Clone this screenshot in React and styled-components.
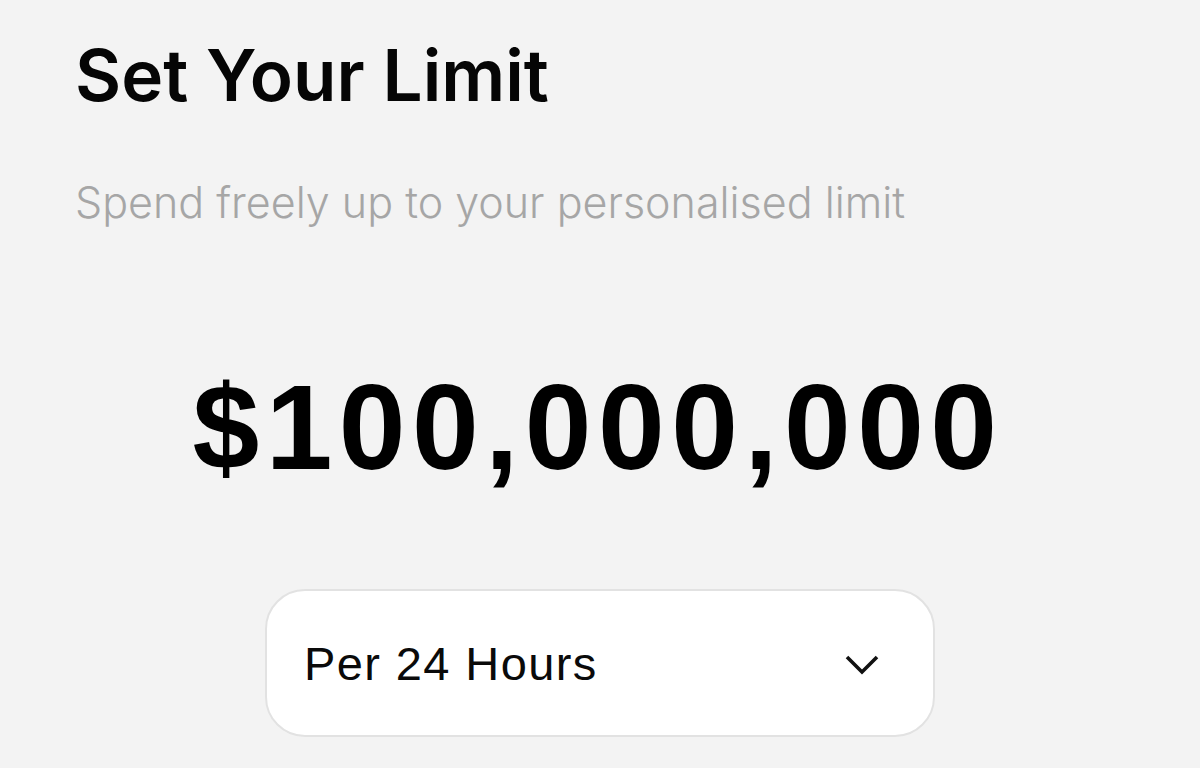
import styled, { createGlobalStyle } from 'styled-components';

const GlobalStyle = createGlobalStyle`
  html, body {
    margin: 0;
    padding: 0;
    background: #f3f3f3;
  }
  body {
    width: 1200px;
    height: 768px;
    overflow: hidden;
  }
`;

// 전체 화면
const Screen = styled.div`
  display: flex;
  flex-direction: column;
  width: 1200px;
  height: 768px;
  box-sizing: border-box;
  padding: 35px 0 0 75px;
  background: #f3f3f3;
`;

const Title = styled.h1`
  margin: 0;
  font-family: Inter, "Liberation Sans", sans-serif;
  font-size: 71px;
  font-weight: 600;
  line-height: 80px;
  letter-spacing: 0;
  color: #050505;
`;

const Subtitle = styled.p`
  margin: 63px 0 0;
  font-family: Inter, "Liberation Sans", sans-serif;
  font-size: 43px;
  font-weight: 300;
  line-height: 48px;
  color: #a6a6a6;
`;

// 금액 + 드롭다운 (가운데 정렬)
const Center = styled.div`
  display: flex;
  flex-direction: column;
  align-items: center;
  margin-left: -75px;
  width: 1200px;
`;

const Amount = styled.div`
  margin-top: 136px;
  padding-right: 4px;
  font-family: "Liberation Sans", Arial, sans-serif;
  font-size: 120px;
  font-weight: 700;
  line-height: 130px;
  letter-spacing: 6.4px;
  color: #000;
`;

const Select = styled.button`
  display: flex;
  align-items: center;
  justify-content: space-between;
  margin-top: 97px;
  width: 670px;
  height: 148px;
  box-sizing: border-box;
  padding: 0 54px 0 37px;
  background: #fff;
  border: 2px solid #e2e2e2;
  border-radius: 40px;
  cursor: pointer;
`;

const SelectLabel = styled.span`
  font-family: "Liberation Sans", Arial, sans-serif;
  font-size: 47px;
  font-weight: 400;
  letter-spacing: 1.4px;
  color: #0a0a0a;
`;

const Chevron = () => (
  <svg width="34" height="20" viewBox="0 0 34 20" fill="none" style={{ marginTop: 4 }}>
    <polyline points="2,2 17,17 32,2" stroke="#111" strokeWidth="3.6" />
  </svg>
);

const App = () => {
  return (
    <Screen>
      <GlobalStyle />
      <Title>Set Your Limit</Title>
      <Subtitle>Spend freely up to your personalised limit</Subtitle>
      <Center>
        <Amount>$100,000,000</Amount>
        <Select>
          <SelectLabel>Per 24 Hours</SelectLabel>
          <Chevron />
        </Select>
      </Center>
    </Screen>
  );
};

export default App;
